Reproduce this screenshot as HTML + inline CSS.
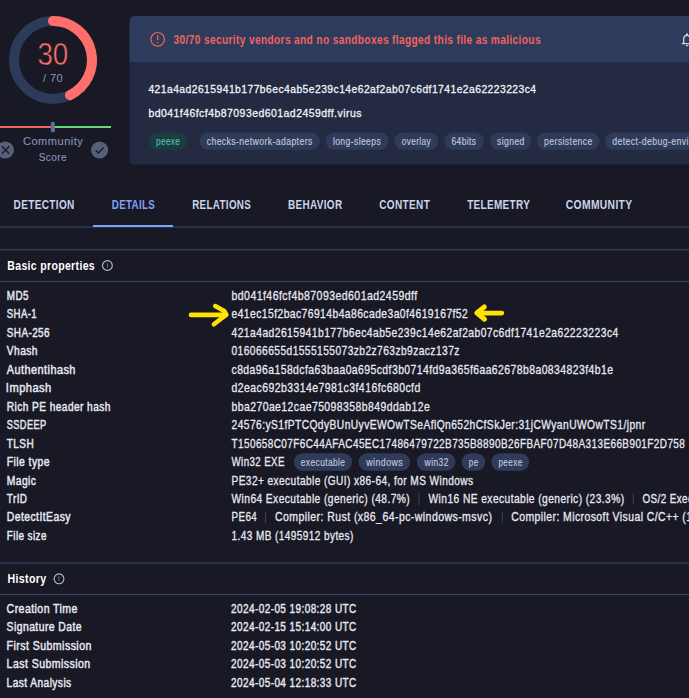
<!DOCTYPE html>
<html><head><meta charset="utf-8"><style>
html,body{margin:0;padding:0;background:#191825;width:689px;height:698px;overflow:hidden}
svg{position:absolute;left:0;top:0;display:block}
text{font-family:"Liberation Sans",sans-serif;white-space:pre}
</style></head><body>
<svg width="689" height="698" viewBox="0 0 689 698">
<rect x="0" y="0" width="689" height="698" fill="#191825"/>
<!-- gauge -->
<circle cx="53.0" cy="60.0" r="39.0" fill="none" stroke="#2d3b5b" stroke-width="10.0"/>
<path d="M 53.00 21.00 A 39.0 39.0 0 0 1 69.92 95.14" fill="none" stroke="#ff6e6a" stroke-width="10.0" stroke-linecap="round"/>
<!-- slider -->
<rect x="0" y="126" width="52" height="2" fill="#ee6763"/>
<rect x="52" y="126" width="59" height="2" fill="#63d67e"/>
<rect x="50.8" y="121.8" width="4" height="10.5" rx="1.6" fill="#5e6ea3"/>
<circle cx="5.4" cy="150" r="8.6" fill="#566079"/>
<path d="M2.0 146.3 L9.2 153.7 M9.2 146.3 L2.0 153.7" stroke="#1b1b28" stroke-width="1.4" fill="none"/>
<circle cx="99.6" cy="150" r="8.6" fill="#566079"/>
<path d="M95.6 150.2 L98.4 152.9 L103.6 147.6" stroke="#1b1b28" stroke-width="1.4" fill="none"/>
<!-- card -->
<path d="M129.5 21 Q129.5 16 134.5 16 L700 16 L700 62 L129.5 62 Z" fill="#2d3c5c"/>
<path d="M129.5 62 L700 62 L700 164.6 L134.5 164.6 Q129.5 164.6 129.5 159.6 Z" fill="#232a42"/>
<circle cx="157.7" cy="39.3" r="6.8" fill="none" stroke="#f0625f" stroke-width="1.2"/>
<rect x="157.05" y="35" width="1.3" height="5" rx="0.6" fill="#f0625f"/>
<circle cx="157.7" cy="42.6" r="0.8" fill="#f0625f"/>
<path transform="translate(679,31.7) scale(0.667)" fill="#cdd2dc" d="M12 22c1.1 0 2-.9 2-2h-4c0 1.1.89 2 2 2zm6-6v-5c0-3.07-1.64-5.64-4.5-6.32V4c0-.83-.67-1.5-1.5-1.5s-1.5.67-1.5 1.5v.68C7.63 5.360 6 7.920 6 11v5l-2 2v1h16v-1l-2-2zm-2 1H8v-6c0-2.48 1.51-4.5 4-4.5s4 2.02 4 4.5v6z"/>
<rect x="148.80" y="132.40" width="38.30" height="17.40" rx="8.70" fill="#1c3d40"/>
<rect x="199.50" y="132.40" width="120.50" height="17.40" rx="8.70" fill="#2f3b59"/>
<rect x="325.70" y="132.40" width="62.70" height="17.40" rx="8.70" fill="#2f3b59"/>
<rect x="394.50" y="132.40" width="43.80" height="17.40" rx="8.70" fill="#2f3b59"/>
<rect x="444.30" y="132.40" width="39.50" height="17.40" rx="8.70" fill="#2f3b59"/>
<rect x="489.80" y="132.40" width="41.80" height="17.40" rx="8.70" fill="#2f3b59"/>
<rect x="536.90" y="132.40" width="62.70" height="17.40" rx="8.70" fill="#2f3b59"/>
<rect x="605.00" y="132.40" width="115.00" height="17.40" rx="8.70" fill="#2f3b59"/>
<rect x="293.80" y="453.20" width="58.30" height="17.60" rx="8.80" fill="#2f3b59"/>
<rect x="358.50" y="453.20" width="51.70" height="17.60" rx="8.80" fill="#2f3b59"/>
<rect x="416.80" y="453.20" width="38.60" height="17.60" rx="8.80" fill="#2f3b59"/>
<rect x="461.70" y="453.20" width="23.50" height="17.60" rx="8.80" fill="#2f3b59"/>
<rect x="491.40" y="453.20" width="37.80" height="17.60" rx="8.80" fill="#2f3b59"/>
<!-- tabs -->
<rect x="0" y="226" width="689" height="2" fill="#29324b"/>
<rect x="93" y="225" width="80" height="2" fill="#7fa3f5"/>
<!-- sections -->
<rect x="0" y="249" width="689" height="1.5" fill="#2e3854"/>
<rect x="0" y="281" width="689" height="1" fill="#3a4766"/>
<circle cx="107.4" cy="265.5" r="4.9" fill="none" stroke="#b9c0d0" stroke-width="1.1"/>
<rect x="106.95" y="263" width="0.9" height="4.6" rx="0.45" fill="#747a8c"/>
<rect x="0" y="562.3" width="689" height="1.6" fill="#2e3854"/>
<rect x="0" y="594" width="689" height="1" fill="#3a4766"/>
<circle cx="59" cy="578.8" r="4.9" fill="none" stroke="#b9c0d0" stroke-width="1.1"/>
<rect x="58.55" y="576.3" width="0.9" height="4.6" rx="0.45" fill="#747a8c"/>
<rect x="418.40" y="493.27" width="1" height="11.4" fill="#3a4360"/>
<rect x="632.70" y="493.27" width="1" height="11.4" fill="#3a4360"/>
<rect x="265.10" y="511.74" width="1" height="11.4" fill="#3a4360"/>
<rect x="501.80" y="511.74" width="1" height="11.4" fill="#3a4360"/>
<!-- arrows -->
<g fill="#ffe200" stroke="#ffe200" stroke-linecap="round" stroke-linejoin="round">
<path d="M191 314.9 L225.5 314.9" stroke-width="4.6" fill="none"/>
<path d="M215.2 306 L224.2 311 L226.4 314.6 L213.9 324.3" stroke-width="4.5" fill="none"/>
<path d="M224 312 L226.4 314.8 L221.5 317.5 Z" stroke-width="2"/>
<path d="M501.8 313.1 L478 313.1" stroke-width="4.8" fill="none"/>
<path d="M484.3 307 L476.8 312.9 L484.5 319.2" stroke-width="5" fill="none"/>
<path d="M477.5 313 L482 310.2 L482.3 315.8 Z" stroke-width="2.5"/>
</g>
<text transform="translate(37.39,64.60) scale(0.9104,1)" font-size="30.5" fill="#ff6e6a" stroke="#191825" stroke-width="0.5">30</text>
<text transform="translate(43.00,82.30) scale(0.9514,1)" font-size="11.5" fill="#8a94b0" stroke="#8a94b0" stroke-width="0.1" letter-spacing="0.5">/ 70</text>
<text transform="translate(22.90,144.80) scale(0.9427,1)" font-size="11.8" fill="#8492bb" stroke="#8492bb" stroke-width="0.15" letter-spacing="0.5">Community</text>
<text transform="translate(38.70,160.70) scale(0.8540,1)" font-size="11.8" fill="#8492bb" stroke="#8492bb" stroke-width="0.15" letter-spacing="0.5">Score</text>
<text transform="translate(173.60,44.00) scale(0.8295,1)" font-size="12.3" font-weight="bold" fill="#f0625f" letter-spacing="0.4">30/70 security vendors and no sandboxes flagged this file as malicious</text>
<text transform="translate(148.40,93.00) scale(0.8986,1)" font-size="11.5" fill="#f2f4f8" stroke="#f2f4f8" stroke-width="0.3" letter-spacing="0.5">421a4ad2615941b177b6ec4ab5e239c14e62af2ab07c6df1741e2a62223223c4</text>
<text transform="translate(148.40,117.40) scale(0.9114,1)" font-size="11.5" fill="#f2f4f8" stroke="#f2f4f8" stroke-width="0.3" letter-spacing="0.5">bd041f46fcf4b87093ed601ad2459dff.virus</text>
<text transform="translate(156.00,144.90) scale(0.7608,1)" font-size="10.8" fill="#50beb0" stroke="#50beb0" stroke-width="0.15" letter-spacing="0.5">peexe</text>
<text transform="translate(206.70,144.90) scale(0.8025,1)" font-size="10.8" fill="#c0c9dc" stroke="#c0c9dc" stroke-width="0.15" letter-spacing="0.5">checks-network-adapters</text>
<text transform="translate(332.90,144.90) scale(0.7942,1)" font-size="10.8" fill="#c0c9dc" stroke="#c0c9dc" stroke-width="0.15" letter-spacing="0.5">long-sleeps</text>
<text transform="translate(401.70,144.90) scale(0.7655,1)" font-size="10.8" fill="#c0c9dc" stroke="#c0c9dc" stroke-width="0.15" letter-spacing="0.5">overlay</text>
<text transform="translate(451.50,144.90) scale(0.7865,1)" font-size="10.8" fill="#c0c9dc" stroke="#c0c9dc" stroke-width="0.15" letter-spacing="0.5">64bits</text>
<text transform="translate(497.00,144.90) scale(0.7986,1)" font-size="10.8" fill="#c0c9dc" stroke="#c0c9dc" stroke-width="0.15" letter-spacing="0.5">signed</text>
<text transform="translate(544.10,144.90) scale(0.8022,1)" font-size="10.8" fill="#c0c9dc" stroke="#c0c9dc" stroke-width="0.15" letter-spacing="0.5">persistence</text>
<text transform="translate(612.20,144.90) scale(0.8091,1)" font-size="10.8" fill="#c0c9dc" stroke="#c0c9dc" stroke-width="0.15" letter-spacing="0.5">detect-debug-environment</text>
<text transform="translate(13.60,209.00) scale(0.8189,1)" font-size="12.3" font-weight="bold" fill="#cad4ea" letter-spacing="0.4">DETECTION</text>
<text transform="translate(111.80,209.00) scale(0.7961,1)" font-size="12.3" font-weight="bold" fill="#7fa3f5" letter-spacing="0.4">DETAILS</text>
<text transform="translate(192.20,209.00) scale(0.7999,1)" font-size="12.3" font-weight="bold" fill="#cad4ea" letter-spacing="0.4">RELATIONS</text>
<text transform="translate(288.00,209.00) scale(0.8115,1)" font-size="12.3" font-weight="bold" fill="#cad4ea" letter-spacing="0.4">BEHAVIOR</text>
<text transform="translate(379.30,209.00) scale(0.8168,1)" font-size="12.3" font-weight="bold" fill="#cad4ea" letter-spacing="0.4">CONTENT</text>
<text transform="translate(467.20,209.00) scale(0.8116,1)" font-size="12.3" font-weight="bold" fill="#cad4ea" letter-spacing="0.4">TELEMETRY</text>
<text transform="translate(565.80,209.00) scale(0.8399,1)" font-size="12.3" font-weight="bold" fill="#cad4ea" letter-spacing="0.4">COMMUNITY</text>
<text transform="translate(7.30,269.80) scale(0.8544,1)" font-size="12.3" font-weight="bold" fill="#ffffff" letter-spacing="0.4">Basic properties</text>
<text transform="translate(6.80,299.80) scale(0.8214,1)" font-size="12.0" fill="#e6e9f0" stroke="#e6e9f0" stroke-width="0.45" letter-spacing="0.5">MD5</text>
<text transform="translate(231.50,299.80) scale(0.8791,1)" font-size="12.0" fill="#e6e9f0" stroke="#e6e9f0" stroke-width="0.3" letter-spacing="0.5">bd041f46fcf4b87093ed601ad2459dff</text>
<text transform="translate(6.80,318.27) scale(0.8017,1)" font-size="12.0" fill="#e6e9f0" stroke="#e6e9f0" stroke-width="0.45" letter-spacing="0.5">SHA-1</text>
<text transform="translate(231.50,318.27) scale(0.8623,1)" font-size="12.0" fill="#e6e9f0" stroke="#e6e9f0" stroke-width="0.3" letter-spacing="0.5">e41ec15f2bac76914b4a86cade3a0f4619167f52</text>
<text transform="translate(6.80,336.74) scale(0.8266,1)" font-size="12.0" fill="#e6e9f0" stroke="#e6e9f0" stroke-width="0.45" letter-spacing="0.5">SHA-256</text>
<text transform="translate(231.50,336.74) scale(0.8619,1)" font-size="12.0" fill="#e6e9f0" stroke="#e6e9f0" stroke-width="0.3" letter-spacing="0.5">421a4ad2615941b177b6ec4ab5e239c14e62af2ab07c6df1741e2a62223223c4</text>
<text transform="translate(6.80,355.21) scale(0.8514,1)" font-size="12.0" fill="#e6e9f0" stroke="#e6e9f0" stroke-width="0.45" letter-spacing="0.5">Vhash</text>
<text transform="translate(231.50,355.21) scale(0.8531,1)" font-size="12.0" fill="#e6e9f0" stroke="#e6e9f0" stroke-width="0.3" letter-spacing="0.5">016066655d1555155073zb2z763zb9zacz137z</text>
<text transform="translate(6.80,373.68) scale(0.9094,1)" font-size="12.0" fill="#e6e9f0" stroke="#e6e9f0" stroke-width="0.45" letter-spacing="0.5">Authentihash</text>
<text transform="translate(231.50,373.68) scale(0.8686,1)" font-size="12.0" fill="#e6e9f0" stroke="#e6e9f0" stroke-width="0.3" letter-spacing="0.5">c8da96a158dcfa63baa0a695cdf3b0714fd9a365f6aa62678b8a0834823f4b1e</text>
<text transform="translate(5.87,392.15) scale(0.9271,1)" font-size="12.0" fill="#e6e9f0" stroke="#e6e9f0" stroke-width="0.45" letter-spacing="0.5">Imphash</text>
<text transform="translate(231.50,392.15) scale(0.8740,1)" font-size="12.0" fill="#e6e9f0" stroke="#e6e9f0" stroke-width="0.3" letter-spacing="0.5">d2eac692b3314e7981c3f416fc680cfd</text>
<text transform="translate(6.80,410.62) scale(0.8470,1)" font-size="12.0" fill="#e6e9f0" stroke="#e6e9f0" stroke-width="0.45" letter-spacing="0.5">Rich PE header hash</text>
<text transform="translate(231.50,410.62) scale(0.8688,1)" font-size="12.0" fill="#e6e9f0" stroke="#e6e9f0" stroke-width="0.3" letter-spacing="0.5">bba270ae12cae75098358b849ddab12e</text>
<text transform="translate(6.80,429.09) scale(0.7698,1)" font-size="12.0" fill="#e6e9f0" stroke="#e6e9f0" stroke-width="0.45" letter-spacing="0.5">SSDEEP</text>
<text transform="translate(231.50,429.09) scale(0.8554,1)" font-size="12.0" fill="#e6e9f0" stroke="#e6e9f0" stroke-width="0.3" letter-spacing="0.5">24576:yS1fPTCQdyBUnUyvEWOwTSeAflQn652hCfSkJer:31jCWyanUWOwTS1/jpnr</text>
<text transform="translate(6.80,447.56) scale(0.8379,1)" font-size="12.0" fill="#e6e9f0" stroke="#e6e9f0" stroke-width="0.45" letter-spacing="0.5">TLSH</text>
<text transform="translate(231.50,447.56) scale(0.8321,1)" font-size="12.0" fill="#e6e9f0" stroke="#e6e9f0" stroke-width="0.3" letter-spacing="0.5">T150658C07F6C44AFAC45EC17486479722B735B8890B26FBAF07D48A313E66B901F2D758</text>
<text transform="translate(6.80,466.03) scale(0.8676,1)" font-size="12.0" fill="#e6e9f0" stroke="#e6e9f0" stroke-width="0.45" letter-spacing="0.5">File type</text>
<text transform="translate(231.50,466.03) scale(0.8109,1)" font-size="12.0" fill="#e6e9f0" stroke="#e6e9f0" stroke-width="0.3" letter-spacing="0.5">Win32 EXE</text>
<text transform="translate(6.80,484.50) scale(0.8586,1)" font-size="12.0" fill="#e6e9f0" stroke="#e6e9f0" stroke-width="0.45" letter-spacing="0.5">Magic</text>
<text transform="translate(231.50,484.50) scale(0.8445,1)" font-size="12.0" fill="#e6e9f0" stroke="#e6e9f0" stroke-width="0.3" letter-spacing="0.5">PE32+ executable (GUI) x86-64, for MS Windows</text>
<text transform="translate(6.80,502.97) scale(0.8295,1)" font-size="12.0" fill="#e6e9f0" stroke="#e6e9f0" stroke-width="0.45" letter-spacing="0.5">TrID</text>
<text transform="translate(231.50,502.97) scale(0.8525,1)" font-size="12.0" fill="#e6e9f0" stroke="#e6e9f0" stroke-width="0.3" letter-spacing="0.5">Win64 Executable (generic) (48.7%)</text>
<text transform="translate(6.80,521.44) scale(0.8663,1)" font-size="12.0" fill="#e6e9f0" stroke="#e6e9f0" stroke-width="0.45" letter-spacing="0.5">DetectItEasy</text>
<text transform="translate(231.50,521.44) scale(0.8178,1)" font-size="12.0" fill="#e6e9f0" stroke="#e6e9f0" stroke-width="0.3" letter-spacing="0.5">PE64</text>
<text transform="translate(6.80,539.91) scale(0.8255,1)" font-size="12.0" fill="#e6e9f0" stroke="#e6e9f0" stroke-width="0.45" letter-spacing="0.5">File size</text>
<text transform="translate(231.50,539.91) scale(0.8377,1)" font-size="12.0" fill="#e6e9f0" stroke="#e6e9f0" stroke-width="0.3" letter-spacing="0.5">1.43 MB (1495912 bytes)</text>
<text transform="translate(300.80,466.03) scale(0.7810,1)" font-size="10.8" fill="#c0c9dc" stroke="#c0c9dc" stroke-width="0.15" letter-spacing="0.5">executable</text>
<text transform="translate(366.32,466.03) scale(0.8194,1)" font-size="10.8" fill="#c0c9dc" stroke="#c0c9dc" stroke-width="0.15" letter-spacing="0.5">windows</text>
<text transform="translate(424.59,466.03) scale(0.7883,1)" font-size="10.8" fill="#c0c9dc" stroke="#c0c9dc" stroke-width="0.15" letter-spacing="0.5">win32</text>
<text transform="translate(468.70,466.03) scale(0.7597,1)" font-size="10.8" fill="#c0c9dc" stroke="#c0c9dc" stroke-width="0.15" letter-spacing="0.5">pe</text>
<text transform="translate(498.40,466.03) scale(0.7577,1)" font-size="10.8" fill="#c0c9dc" stroke="#c0c9dc" stroke-width="0.15" letter-spacing="0.5">peexe</text>
<text transform="translate(428.50,502.97) scale(0.8538,1)" font-size="12.0" fill="#e6e9f0" stroke="#e6e9f0" stroke-width="0.3" letter-spacing="0.5">Win16 NE executable (generic) (23.3%)</text>
<text transform="translate(642.50,502.97) scale(0.8231,1)" font-size="12.0" fill="#e6e9f0" stroke="#e6e9f0" stroke-width="0.3" letter-spacing="0.5">OS/2 Executable (generic) (12.7%)</text>
<text transform="translate(274.90,521.44) scale(0.8776,1)" font-size="12.0" fill="#e6e9f0" stroke="#e6e9f0" stroke-width="0.3" letter-spacing="0.5">Compiler: Rust (x86_64-pc-windows-msvc)</text>
<text transform="translate(511.20,521.44) scale(0.8696,1)" font-size="12.0" fill="#e6e9f0" stroke="#e6e9f0" stroke-width="0.3" letter-spacing="0.5">Compiler: Microsoft Visual C/C++ (19.36.33923)</text>
<text transform="translate(7.50,583.00) scale(0.8658,1)" font-size="12.3" font-weight="bold" fill="#ffffff" letter-spacing="0.4">History</text>
<text transform="translate(6.60,612.80) scale(0.8789,1)" font-size="12.0" fill="#e6e9f0" stroke="#e6e9f0" stroke-width="0.45" letter-spacing="0.5">Creation Time</text>
<text transform="translate(231.10,612.80) scale(0.8331,1)" font-size="12.0" fill="#e6e9f0" stroke="#e6e9f0" stroke-width="0.4" letter-spacing="0.5">2024-02-05 19:08:28 UTC</text>
<text transform="translate(6.60,631.30) scale(0.8667,1)" font-size="12.0" fill="#e6e9f0" stroke="#e6e9f0" stroke-width="0.45" letter-spacing="0.5">Signature Date</text>
<text transform="translate(231.10,631.30) scale(0.8331,1)" font-size="12.0" fill="#e6e9f0" stroke="#e6e9f0" stroke-width="0.4" letter-spacing="0.5">2024-02-15 15:14:00 UTC</text>
<text transform="translate(6.60,649.80) scale(0.8826,1)" font-size="12.0" fill="#e6e9f0" stroke="#e6e9f0" stroke-width="0.45" letter-spacing="0.5">First Submission</text>
<text transform="translate(231.10,649.80) scale(0.8331,1)" font-size="12.0" fill="#e6e9f0" stroke="#e6e9f0" stroke-width="0.4" letter-spacing="0.5">2024-05-03 10:20:52 UTC</text>
<text transform="translate(6.60,668.30) scale(0.8806,1)" font-size="12.0" fill="#e6e9f0" stroke="#e6e9f0" stroke-width="0.45" letter-spacing="0.5">Last Submission</text>
<text transform="translate(231.10,668.30) scale(0.8331,1)" font-size="12.0" fill="#e6e9f0" stroke="#e6e9f0" stroke-width="0.4" letter-spacing="0.5">2024-05-03 10:20:52 UTC</text>
<text transform="translate(6.60,686.80) scale(0.8501,1)" font-size="12.0" fill="#e6e9f0" stroke="#e6e9f0" stroke-width="0.45" letter-spacing="0.5">Last Analysis</text>
<text transform="translate(231.10,686.80) scale(0.8331,1)" font-size="12.0" fill="#e6e9f0" stroke="#e6e9f0" stroke-width="0.4" letter-spacing="0.5">2024-05-04 12:18:33 UTC</text>
</svg>
</body></html>
